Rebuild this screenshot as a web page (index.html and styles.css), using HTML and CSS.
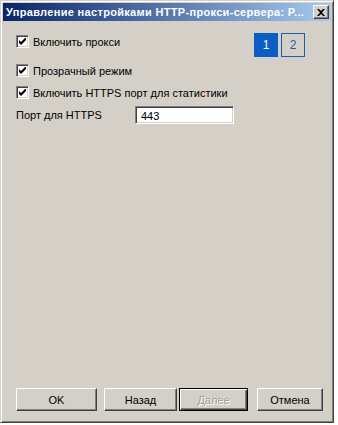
FILE: index.html
```html
<!DOCTYPE html>
<html>
<head>
<meta charset="utf-8">
<link rel="stylesheet" href="styles.css">
</head>
<body>
<div class="window">
  <div class="titlebar">
    <span class="title">Управление настройками HTTP-прокси-сервера: P...</span>
    <span class="close">
      <svg width="8" height="7" viewBox="0 0 8 7"><path d="M0 0h2l2 2 2-2h2L5 3.5 8 7H6L4 5 2 7H0l3-3.5z" fill="#000"/></svg>
    </span>
  </div>
  <div class="content">
    <div class="row first">
      <label class="check"><span class="box"><svg width="7" height="7" viewBox="0 0 7 7"><path d="M0 2v3l2 2 5-5V-1L2 4z" fill="#000"/></svg></span>Включить прокси</label>
      <div class="pages">
        <span class="page active">1</span>
        <span class="page">2</span>
      </div>
    </div>
    <div class="row second">
      <label class="check"><span class="box"><svg width="7" height="7" viewBox="0 0 7 7"><path d="M0 2v3l2 2 5-5V-1L2 4z" fill="#000"/></svg></span>Прозрачный режим</label>
    </div>
    <div class="row third">
      <label class="check"><span class="box"><svg width="7" height="7" viewBox="0 0 7 7"><path d="M0 2v3l2 2 5-5V-1L2 4z" fill="#000"/></svg></span>Включить HTTPS порт для статистики</label>
    </div>
    <div class="row field">
      <span class="label">Порт для HTTPS</span>
      <span class="input">443</span>
    </div>
  </div>
  <div class="buttons">
    <span class="btn ok">OK</span>
    <span class="btn back">Назад</span>
    <span class="btn next disabled"><span class="inner">Далее</span></span>
    <span class="btn cancel">Отмена</span>
  </div>
</div>
</body>
</html>
```
FILE: styles.css
```css
html, body {
  margin: 0;
  padding: 0;
  background: #ffffff;
}
body {
  font-family: "Liberation Sans", Arial, sans-serif;
  font-size: 11px;
  color: #000;
}
.window {
  width: 334px;
  height: 423px;
  box-sizing: border-box;
  background: #d4d0c8;
  border-top: 1px solid #d4d0c8;
  border-left: 1px solid #d4d0c8;
  border-right: 1px solid #404040;
  border-bottom: 1px solid #404040;
  box-shadow: inset 1px 1px 0 #ffffff, inset -1px -1px 0 #808080;
  padding: 2px;
  display: flex;
  flex-direction: column;
}
.titlebar {
  height: 18px;
  background: linear-gradient(to right, #0a246a, #a6caf0);
  display: flex;
  align-items: center;
  justify-content: space-between;
  padding: 0 2px 0 3px;
}
.title {
  color: #fff;
  font-weight: bold;
  font-size: 11px;
  white-space: nowrap;
  letter-spacing: 0.32px;
}
.close {
  width: 16px;
  height: 14px;
  box-sizing: border-box;
  background: #d4d0c8;
  border-top: 1px solid #fff;
  border-left: 1px solid #fff;
  border-right: 1px solid #404040;
  border-bottom: 1px solid #404040;
  box-shadow: inset -1px -1px 0 #808080;
  display: flex;
  align-items: center;
  justify-content: center;
}
.content {
  flex: 1;
  padding: 0 0 0 13px;
}
.row {
  display: flex;
  align-items: center;
}
.row.first {
  margin-top: 12px;
  height: 24px;
  align-items: flex-start;
  justify-content: space-between;
  padding-right: 26px;
}
.row.first .check {
  margin-top: 2px;
}
.row.second {
  margin-top: 7px;
  height: 13px;
}
.row.third {
  margin-top: 9px;
  height: 13px;
}
.row.field {
  margin-top: 7px;
  height: 18px;
}
.check {
  display: flex;
  align-items: center;
  white-space: nowrap;
}
.box {
  width: 13px;
  height: 13px;
  box-sizing: border-box;
  background: #fff;
  border-top: 1px solid #808080;
  border-left: 1px solid #808080;
  border-right: 1px solid #fff;
  border-bottom: 1px solid #fff;
  box-shadow: inset 1px 1px 0 #404040, inset -1px -1px 0 #d4d0c8;
  display: flex;
  align-items: center;
  justify-content: center;
  margin-right: 4px;
}
.box svg {
  display: block;
}
.pages {
  display: flex;
  gap: 3px;
}
.page {
  width: 24px;
  height: 24px;
  box-sizing: border-box;
  border: 1px solid #1a5fb4;
  color: #1a5fb4;
  display: flex;
  align-items: center;
  justify-content: center;
  font-size: 12px;
}
.page.active {
  background: #0b5ec4;
  border-color: #0b5ec4;
  color: #fff;
}
.label {
  width: 119px;
}
.input {
  width: 99px;
  height: 18px;
  box-sizing: border-box;
  background: #fff;
  border-top: 1px solid #808080;
  border-left: 1px solid #808080;
  border-right: 1px solid #fff;
  border-bottom: 1px solid #fff;
  box-shadow: inset 1px 1px 0 #404040, inset -1px -1px 0 #d4d0c8;
  padding: 1px 0 0 5px;
  display: flex;
  align-items: center;
}
.buttons {
  display: flex;
  padding: 0 0 9px 13px;
  height: 23px;
}
.btn {
  height: 23px;
  box-sizing: border-box;
  background: #d4d0c8;
  border-top: 1px solid #fff;
  border-left: 1px solid #fff;
  border-right: 1px solid #404040;
  border-bottom: 1px solid #404040;
  box-shadow: inset -1px -1px 0 #808080;
  display: flex;
  align-items: center;
  justify-content: center;
}
.btn.ok { width: 81px; }
.btn.back { width: 73px; margin-left: 7px; }
.btn.next {
  width: 69px;
  margin-left: 2px;
  border: 1px solid #000;
  box-shadow: inset 1px 1px 0 #fff, inset -1px -1px 0 #404040, inset -2px -2px 0 #808080;
  color: #a0a0a0;
}
.btn.next .inner {
  text-shadow: 1px 1px 0 #fff;
}
.btn.cancel { width: 66px; margin-left: 9px; }
```
